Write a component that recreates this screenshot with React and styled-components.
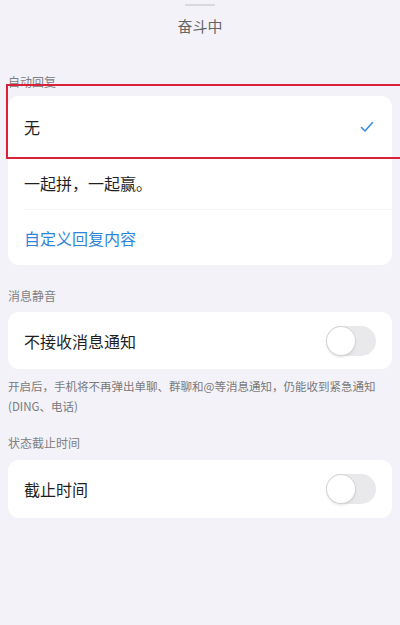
import React from "react";
import styled, { createGlobalStyle } from "styled-components";

const GlobalStyle = createGlobalStyle`
  body {
    margin: 0;
    background: #f3f2f8;
    font-family: "Noto Sans CJK SC", "Noto Sans", sans-serif;
  }
`;

const Page = styled.div`
  width: 400px;
  min-height: 625px;
  background: #f3f2f8;
  overflow: hidden;
  position: relative;
`;

const Header = styled.div`
  display: flex;
  flex-direction: column;
  align-items: center;
`;

const NameTail = styled.div`
  width: 30px;
  height: 3px;
  margin-top: 1px;
  border-bottom: 2px solid #d8d8de;
  border-radius: 1px;
`;

const Status = styled.div`
  margin-top: 10px;
  font-size: 15px;
  line-height: 20px;
  color: #666;
`;

const Section = styled.div`
  position: relative;
`;

const Label = styled.div`
  padding: ${(p) => p.$top || 0}px 8px 0;
  font-size: 12px;
  line-height: 17px;
  color: #808080;
  height: 17px;
`;

const Card = styled.div`
  margin: ${(p) => p.$gap || 9}px 8px 0;
  background: #fff;
  border-radius: 11px;
  overflow: hidden;
`;

const Row = styled.div`
  display: flex;
  align-items: center;
  justify-content: space-between;
  height: ${(p) => p.$h || 56}px;
  padding: 0 16px;
  font-size: 16px;
  color: ${(p) => (p.$link ? "#2f85d8" : "#1f1f1f")};
`;

const Divider = styled.div`
  height: 1px;
  margin-left: 16px;
  background: #f5f5f5;
`;

const Check = styled.svg`
  width: 14px;
  height: 12px;
  margin-right: 2px;
`;

const Toggle = styled.div`
  width: 50px;
  height: 30px;
  border-radius: 15px;
  background: #e9e9eb;
  position: relative;
  flex-shrink: 0;

  &::after {
    content: "";
    position: absolute;
    left: 1px;
    top: 1px;
    width: 28px;
    height: 28px;
    border-radius: 50%;
    background: #fff;
    box-shadow: 0 0 0 1px #d4d4d4, 0 2px 3px rgba(0, 0, 0, 0.12);
  }
`;

const Note = styled.div`
  padding: 7px 8px 0;
  font-size: 11.5px;
  line-height: 20px;
  color: #7a7a7a;
`;

const Highlight = styled.div`
  position: absolute;
  left: 6px;
  top: 48px;
  width: 400px;
  height: 71px;
  border: 2px solid #d9223a;
  pointer-events: none;
`;

export default function App() {
  return (
    <>
      <GlobalStyle />
      <Page>
        <Header>
          <NameTail />
          <Status>奋斗中</Status>
        </Header>

        <Section>
          <Label $top={37}>自动回复</Label>
          <Card $gap={6}>
            <Row $h={61}>
              无
              <Check viewBox="0 0 14 12">
                <path
                  d="M1.5 6.5 L5 10 L12.5 1.5"
                  fill="none"
                  stroke="#3a8ee0"
                  strokeWidth="1.6"
                  strokeLinecap="round"
                  strokeLinejoin="round"
                />
              </Check>
            </Row>
            <Row $h={52}>一起拼，一起赢。</Row>
            <Divider />
            <Row $h={55} $link>自定义回复内容</Row>
          </Card>
          <Highlight />
        </Section>

        <Label $top={22}>消息静音</Label>
        <Card $gap={8}>
          <Row $h={57}>
            不接收消息通知
            <Toggle />
          </Row>
        </Card>
        <Note>
          开启后，手机将不再弹出单聊、群聊和@等消息通知，仍能收到紧急通知(DING、电话)
        </Note>

        <Label $top={18}>状态截止时间</Label>
        <Card $gap={9}>
          <Row $h={58}>
            截止时间
            <Toggle />
          </Row>
        </Card>
      </Page>
    </>
  );
}
